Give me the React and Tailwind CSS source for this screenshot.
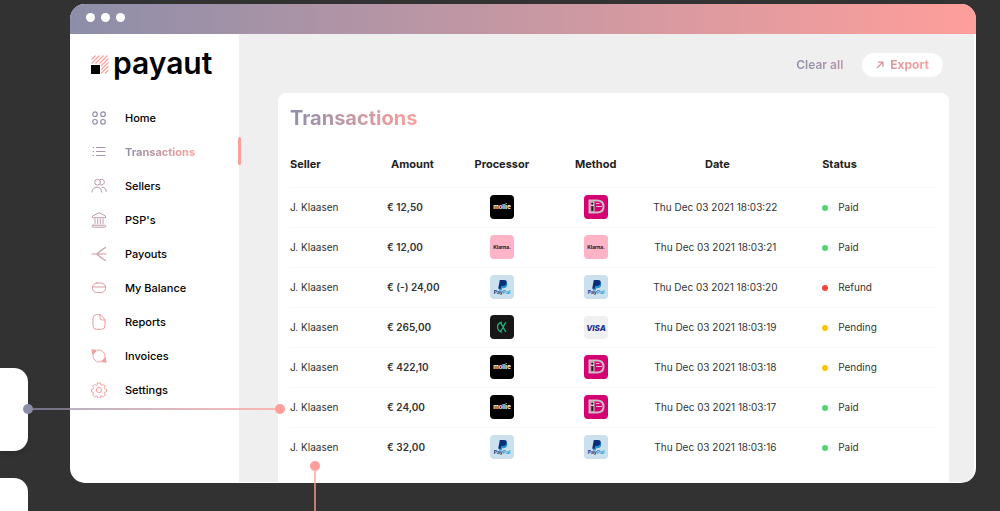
import React, { useState } from 'react';

const navItems = [
  { id: 'home', label: 'Home', icon: HomeIcon, color: 'text-[#8f8fac]' },
  { id: 'transactions', label: 'Transactions', icon: ListIcon, color: 'text-[#a795ae]' },
  { id: 'sellers', label: 'Sellers', icon: SellersIcon, color: 'text-[#b297ac]' },
  { id: 'psps', label: "PSP's", icon: BankIcon, color: 'text-[#c399a8]' },
  { id: 'payouts', label: 'Payouts', icon: SplitIcon, color: 'text-[#d09aa5]' },
  { id: 'balance', label: 'My Balance', icon: WalletIcon, color: 'text-[#dd9ba2]' },
  { id: 'reports', label: 'Reports', icon: FileIcon, color: 'text-[#e99c9f]' },
  { id: 'invoices', label: 'Invoices', icon: SyncIcon, color: 'text-[#f39c9c]' },
  { id: 'settings', label: 'Settings', icon: GearIcon, color: 'text-[#fc9d9b]' },
];

const rows = [
  { seller: 'J. Klaasen', amount: '€ 12,50', processor: 'mollie', method: 'ideal', date: 'Thu Dec 03 2021 18:03:22', status: 'Paid' },
  { seller: 'J. Klaasen', amount: '€ 12,00', processor: 'klarna', method: 'klarna', date: 'Thu Dec 03 2021 18:03:21', status: 'Paid' },
  { seller: 'J. Klaasen', amount: '€ (-) 24,00', processor: 'paypal', method: 'paypal', date: 'Thu Dec 03 2021 18:03:20', status: 'Refund' },
  { seller: 'J. Klaasen', amount: '€ 265,00', processor: 'ck', method: 'visa', date: 'Thu Dec 03 2021 18:03:19', status: 'Pending' },
  { seller: 'J. Klaasen', amount: '€ 422,10', processor: 'mollie', method: 'ideal', date: 'Thu Dec 03 2021 18:03:18', status: 'Pending' },
  { seller: 'J. Klaasen', amount: '€ 24,00', processor: 'mollie', method: 'ideal', date: 'Thu Dec 03 2021 18:03:17', status: 'Paid' },
  { seller: 'J. Klaasen', amount: '€ 32,00', processor: 'paypal', method: 'paypal', date: 'Thu Dec 03 2021 18:03:16', status: 'Paid' },
];

const statusColors = {
  Paid: 'bg-[#58d26e]',
  Refund: 'bg-[#ff4040]',
  Pending: 'bg-[#ffc400]',
};

function Icon({ children }) {
  return (
    <svg viewBox="0 0 16 16" className="w-4 h-4 flex-shrink-0" fill="none" stroke="currentColor" strokeLinecap="round" strokeLinejoin="round" aria-hidden="true">
      {children}
    </svg>
  );
}

function HomeIcon() {
  return (
    <Icon>
      <g strokeWidth="1.2">
        <circle cx="4" cy="4.2" r="2.3" />
        <circle cx="12" cy="4.2" r="2.3" />
        <circle cx="4" cy="11.8" r="2.3" />
        <circle cx="12" cy="11.8" r="2.3" />
      </g>
    </Icon>
  );
}

function ListIcon() {
  return (
    <Icon>
      <path d="M5.5 3.5H14M5.5 7.5H14M5.5 11.5H14" />
      <path d="M2 3.5h.6M2 7.5h.6M2 11.5h.6" />
    </Icon>
  );
}

function SellersIcon() {
  return (
    <Icon>
      <circle cx="6.6" cy="4.2" r="2.9" />
      <path d="M9 1.6a2.9 2.9 0 1 1 .7 5.3" />
      <path d="M1 14c0-3 2-4.8 4.8-4.8s4.8 1.800 4.800 4.800" />
      <path d="M11 9.200c2.600 0 4.300 1.800 4.300 4.300" />
    </Icon>
  );
}

function BankIcon() {
  return (
    <Icon>
      <path d="M1.500 5.300V4L8 .7 14.500 4v1.300z" />
      <path d="M4 7v4.500M6.700 7v4.500M9.300 7v4.500M12 7v4.500" />
      <rect x="1.200" y="13.200" width="13.600" height="2" rx="1" />
    </Icon>
  );
}

function SplitIcon() {
  return (
    <Icon>
      <path strokeWidth="1.200" d="M1 8h14M14.500 1.500C11.500 3.500 8.500 5 6 8c2.500 3 5.500 4.500 8.500 6.500" />
    </Icon>
  );
}

function WalletIcon() {
  return (
    <Icon>
      <rect x="1.500" y="3" width="13" height="9.600" rx="4.300" />
      <path d="M1.500 7h13" />
    </Icon>
  );
}

function FileIcon() {
  return (
    <Icon>
      <path d="M9 .7H5.500a3.500 3.500 0 0 0-3.500 3.500v7.600a3.500 3.500 0 0 0 3.500 3.500h5a3.500 3.500 0 0 0 3.500-3.500V6z" />
      <path d="M9 .7v2.800A2.500 2.500 0 0 0 11.500 6H14" />
    </Icon>
  );
}

function SyncIcon() {
  return (
    <Icon>
      <path d="M6.500 2.100A6.100 6.100 0 0 1 13.900 9.500" />
      <path d="M9.500 13.900A6.100 6.100 0 0 1 2.100 6.500" />
      <path d="M1.300 1.800l4.200.6-3.600 3.600z" fill="currentColor" />
      <path d="M14.700 14.200l-4.200-.6 3.600-3.600z" fill="currentColor" />
    </Icon>
  );
}

function GearIcon() {
  return (
    <Icon>
      <circle cx="8" cy="8" r="2.600" />
      <path d="M6.700 1h2.600l.5 1.900 1 .4 1.700-1 1.800 1.800-1 1.700.4 1 1.800.5v2.500l-1.800.5-.4 1 1 1.700-1.800 1.800-1.700-1-1 .4-.5 1.800H6.700l-.5-1.800-1-.4-1.700 1L1.700 13l1-1.700-.4-1-1.800-.5V7.300l1.800-.5.4-1-1-1.700 1.800-1.800 1.700 1 1-.4z" />
    </Icon>
  );
}

function LogoMark() {
  return (
    <svg viewBox="0 0 18 19" className="w-[18px] h-[19px] flex-shrink-0" aria-hidden="true">
      <g stroke="#ff9e9a" strokeWidth="1.100" fill="none">
        <path d="M.5 4.500l4-4M.5 8.500l8-8M4.500 8.500l8-8M8.500 8.500l8-8M10 11l7.500-7.500M10 15l7.500-7.500M10 18.500l7.500-7.500M14 18.500l3.500-3.500" />
      </g>
      <path d="M0 10h9v9H0z" fill="#000" />
    </svg>
  );
}

// Square brand tiles used in the processor and method columns
function Brand({ name }) {
  const text = { textAnchor: 'middle', fontFamily: 'Inter, sans-serif', fontWeight: 700 };
  return (
    <svg viewBox="0 0 24 24" className="w-6 h-6 mx-auto block" role="img" aria-label={name}>
      {name === 'mollie' && (
        <>
          <rect width="24" height="24" rx="4" fill="#000" />
          <text x="12" y="14" fontSize="6" fill="#fff" {...text}>mollie</text>
        </>
      )}
      {name === 'klarna' && (
        <>
          <rect width="24" height="24" rx="4" fill="#ffb3c7" />
          <text x="12" y="14" fontSize="5" fill="#17120f" {...text}>Klarna.</text>
        </>
      )}
      {name === 'paypal' && (
        <>
          <rect width="24" height="24" rx="4" fill="#cae0ec" />
          <path d="M10.500 7h4c2.200 0 3.200 1.400 2.700 3.300-.5 2-2 2.900-4 2.900h-1l-.6 2.300H9z" fill="#2790d0" />
          <path d="M9.800 5h4.300c2 0 3 1.200 2.600 3-.5 2-2 3-4 3h-1.500l-.6 2.700H8.200z" fill="#0b2f7c" />
          <text x="12" y="19" fontSize="5" {...text}>
            <tspan fill="#16397f">Pay</tspan>
            <tspan fill="#2b97d8">Pal</tspan>
          </text>
        </>
      )}
      {name === 'ck' && (
        <>
          <rect width="24" height="24" rx="4" fill="#171717" />
          <g fill="none" stroke="#23b37c" strokeWidth="1.300">
            <path d="M12 7.200c-2.200 0-4.500 2-4.500 4.900s2.300 4.900 4.500 4.900" />
            <path d="M10.500 8l3 4.100-3 4.100M15.800 7.200L13 12.100l2.800 4.900" />
          </g>
        </>
      )}
      {name === 'visa' && (
        <>
          <rect y="1" width="24" height="23" rx="4" fill="#f0f0f2" />
          <text x="12" y="16" fontSize="8" fontStyle="italic" fill="#1f2f8c" {...text} fontWeight="800">VISA</text>
        </>
      )}
      {name === 'ideal' && (
        <>
          <rect width="24" height="24" rx="4" fill="#d50072" />
          <path d="M5.500 5.500h7.500c4.500 0 6.500 2.600 6.500 6.300S17.500 17.500 13 17.500H5.500z" fill="#d50072" stroke="#c9c0c6" strokeWidth="2" />
          <path d="M6.500 6.500h4v10h-4z" fill="#d9d3d6" />
          <circle cx="8.300" cy="8.600" r="1.200" fill="#222" />
          <path d="M7.200 11h2.300v5H7.200z" fill="#222" />
          <path d="M12 8.500h3.500M12 11.500h6" stroke="#eab4d0" fill="none" />
        </>
      )}
    </svg>
  );
}

export default function App() {
  const [active, setActive] = useState('transactions');

  return (
    <div className="relative min-h-screen overflow-hidden bg-[#323232] flex gap-[42px] pr-6 font-['Inter',sans-serif]">
      {/* Callout cards running off the left edge */}
      <div className="w-7 flex-shrink-0 flex flex-col gap-[27px] pt-[368px]">
        <div className="h-[83px] bg-white rounded-r-[14px] shadow-md" />
        <div className="flex-1 bg-white rounded-tr-[14px]" />
      </div>

      {/* Browser window */}
      <div className="flex-1 min-w-0 mt-1 mb-7 rounded-[15px] bg-white overflow-hidden flex flex-col">
        <div className="h-[30px] flex-shrink-0 flex items-center gap-1.5 px-4 pb-1 bg-linear-to-r from-[#8c8ea9] to-[#ff9e9a]">
          <span className="w-[9px] h-[9px] rounded-full bg-white" />
          <span className="w-[9px] h-[9px] rounded-full bg-white" />
          <span className="w-[9px] h-[9px] rounded-full bg-white" />
        </div>

        <div className="flex-1 flex">
          {/* Sidebar */}
          <aside className="w-[169px] flex-shrink-0">
            <div className="h-[67px] flex items-center gap-1 pl-[21px] pb-1.5">
              <LogoMark />
              <span className="text-[30px] leading-8 font-semibold text-black pb-1">payaut</span>
            </div>
            <nav>
              {navItems.map(({ id, label, icon: NavIcon, color }) => (
                <button
                  key={id}
                  onClick={() => setActive(id)}
                  className="relative w-full h-[34px] flex items-center gap-[18px] pl-[21px] text-[11px] font-medium text-black"
                >
                  <span className={color}><NavIcon /></span>
                  {active === id ? (
                    <span className="font-bold text-transparent bg-clip-text bg-linear-to-r from-[#8c8ea9] to-[#ff9e9a]">{label}</span>
                  ) : (
                    <span>{label}</span>
                  )}
                  {active === id && <span className="absolute -right-0.5 top-0.5 w-[3px] h-7 rounded-sm bg-[#ff9e9a]" />}
                </button>
              ))}
            </nav>
          </aside>

          {/* Main */}
          <main className="flex-1 min-w-0 mr-0.5 mb-px bg-[#efefef] flex flex-col">
            <div className="h-[59px] flex items-center justify-end gap-[19px] pr-[31px] pt-0.5 text-xs font-semibold">
              <button className="text-transparent bg-clip-text bg-linear-to-r from-[#8c8ea9] to-[#b394a6]">Clear all</button>
              <button className="h-6 px-[14px] rounded-full bg-white flex items-center gap-1.5 font-bold">
                <svg viewBox="0 0 8 8" className="w-2 h-2" fill="none" stroke="#d3949f" strokeWidth="1.200" aria-hidden="true">
                  <path d="M1 7l6-6M2 1.200h5V6" />
                </svg>
                <span className="text-transparent bg-clip-text bg-linear-to-r from-[#dd969e] to-[#ff9e9a]">Export</span>
              </button>
            </div>

            <section className="flex-1 ml-[39px] mr-[25px] px-3 pt-[11px] bg-white rounded-t-lg">
              <h1 className="w-fit text-xl leading-7 font-bold text-transparent bg-clip-text bg-linear-to-r from-[#8c8ea9] to-[#ff9e9a]">Transactions</h1>
              <table className="w-full table-fixed mt-[10px] text-[10px] text-[#333]">
                <thead>
                  <tr className="h-[45px] text-[11px] text-[#222] border-b border-[#f9f9f9]">
                    <th className="w-[15%] text-left font-bold">Seller</th>
                    <th className="w-[10.5%] text-left font-bold pl-1">Amount</th>
                    <th className="w-[14.5%] font-bold">Processor</th>
                    <th className="w-[14.5%] font-bold">Method</th>
                    <th className="w-[22.5%] font-bold pl-1">Date</th>
                    <th className="w-[23%] text-left font-bold pl-[34px]">Status</th>
                  </tr>
                </thead>
                <tbody>
                  {rows.map((row) => (
                    <tr key={row.date} className="h-10 border-b border-[#f9f9f9] last:border-0">
                      <td className="pt-px">{row.seller}</td>
                      <td className="pt-px font-semibold whitespace-nowrap">{row.amount}</td>
                      <td><Brand name={row.processor} /></td>
                      <td><Brand name={row.method} /></td>
                      <td className="pt-px text-center whitespace-nowrap">{row.date}</td>
                      <td className="pt-px pl-[34px]">
                        <span className="flex items-center gap-[10px]">
                          <span className={`w-1.5 h-1.5 rounded-full ${statusColors[row.status]}`} />
                          {row.status}
                        </span>
                      </td>
                    </tr>
                  ))}
                </tbody>
              </table>
            </section>
          </main>
        </div>
      </div>

      {/* Connectors from the callouts to the table */}
      <div className="absolute left-[23px] top-[404px] w-[262px] h-[10px] flex items-center">
        <span className="w-[10px] h-[10px] rounded-full bg-[#8c8ea9]" />
        <span className="flex-1 h-0.5 bg-linear-to-r from-[#8c8ea9] to-[#ff9e9a] opacity-70" />
        <span className="w-[10px] h-[10px] rounded-full bg-[#ff9e9a]" />
      </div>
      <div className="absolute left-[310px] top-[461px] bottom-0 w-[10px] flex flex-col items-center">
        <span className="w-[10px] h-[10px] flex-shrink-0 rounded-full bg-[#ff9e9a]" />
        <span className="flex-1 w-0.5 bg-[#ff9e9a] opacity-70" />
      </div>
    </div>
  );
}
